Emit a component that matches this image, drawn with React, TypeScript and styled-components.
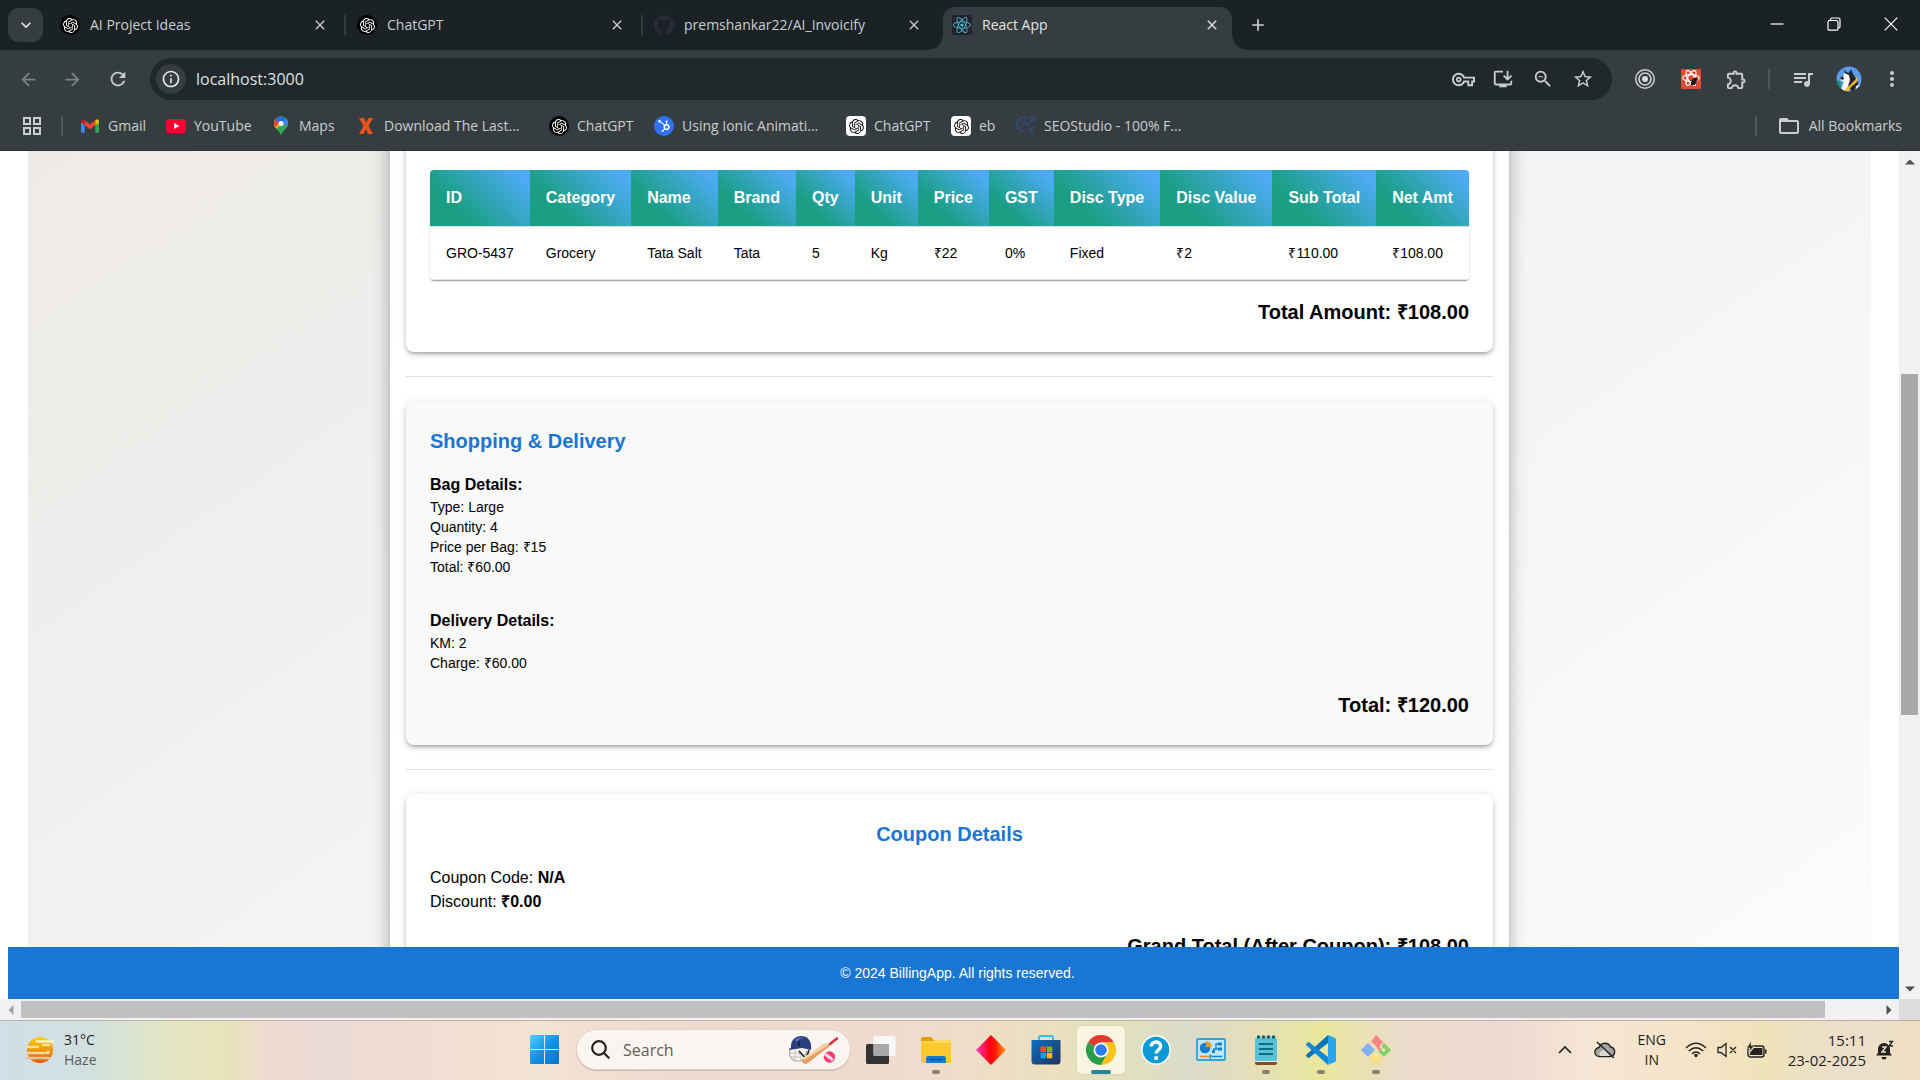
import React from "react";
import styled, { createGlobalStyle, css } from "styled-components";
import {
  MdArrowBack, MdArrowForward, MdRefresh, MdOutlineGridView, MdFolderOpen, MdMoreVert,
  MdQueueMusic, MdStarBorder, MdOutlineExtension, MdZoomOut, MdOutlineVpnKey,
  MdOutlineInstallDesktop, MdOutlineInfo, MdClose, MdAdd, MdExpandMore,
} from "react-icons/md";
import { SiOpenai, SiGithub, SiHubspot } from "react-icons/si";
import { FaReact } from "react-icons/fa";

const uiFont = `"Open Sans", "Noto Sans", sans-serif`;
const pageFont = `"Liberation Sans", Arial, sans-serif`;

const Global = createGlobalStyle`
  *, *::before, *::after { box-sizing: border-box; }
  html, body { margin: 0; }
  body { overflow: hidden; font-family: ${pageFont}; color: #000; background: #fff; }
  button, input { font: inherit; color: inherit; margin: 0; padding: 0; border: 0; background: none; outline: none; }
  a { color: inherit; text-decoration: none; }
  h2, h3, p { margin: 0; }
`;

const Screen = styled.div`
  display: flex;
  flex-direction: column;
  height: 100vh;
`;

/* ---------- browser frame ---------- */
const Center = css`
  display: flex;
  align-items: center;
  justify-content: center;
`;
const Browser = styled.header`
  font-family: ${uiFont};
  color: #c9cdcf;
  background: #363d40;
  font-size: 14px;
  line-height: 20px;
  border-bottom: 1px solid #2b3134;
`;
const TabStrip = styled.div`
  display: flex;
  height: 50px;
  background: #1b2225;
`;
const TabSearch = styled.button`
  ${Center}
  width: 35px;
  height: 34px;
  margin: 8px 4px 0 8px;
  border-radius: 11px;
  background: #363d40;
  color: #e3e5e6;
`;
const Tab = styled.div<{ $active?: boolean; $divider?: boolean }>`
  position: relative;
  display: flex;
  align-items: center;
  width: 297px;
  padding: 0 16px 0 13px;
  ${(p) => p.$divider && css`
    &::after {
      content: "";
      position: absolute;
      right: -2px;
      top: 15px;
      width: 2px;
      height: 20px;
      background: #363d40;
    }
  `}
  ${(p) => p.$active && css`
    width: 289px;
    margin: 7px 0 0 5px;
    padding: 0 12px 7px 9px;
    color: #e3e5e6;
    background: #363d40;
    border-radius: 12px 12px 0 0;
    &::before, &::after {
      content: "";
      position: absolute;
      bottom: 0;
      width: 14px;
      height: 14px;
    }
    &::before { left: -14px; background: radial-gradient(circle at 0 0, transparent 13px, #363d40 14px); }
    &::after { right: -14px; background: radial-gradient(circle at 100% 0, transparent 13px, #363d40 14px); }
  `}
`;
const TabTitle = styled.button`
  flex: 1;
  display: flex;
  align-items: center;
  gap: 10px;
  text-align: left;
  white-space: nowrap;
`;
const IconButton = styled.button<{ $w?: number }>`
  ${Center}
  flex: none;
  width: ${(p) => p.$w ?? 16}px;
`;
const WindowButtons = styled.div`
  display: flex;
  margin-left: auto;
  padding-bottom: 2px;
  color: #fff;
`;
const Toolbar = styled.div`
  display: flex;
  align-items: center;
  height: 50px;
  padding: 8px 7px 0 6px;
`;
const Omnibox = styled.div`
  flex: 1;
  display: flex;
  align-items: center;
  height: 42px;
  margin: 0 10px;
  padding: 0 9px 0 6px;
  border-radius: 21px;
  background: #20282b;
`;
const InfoButton = styled.button`
  ${Center}
  width: 30px;
  height: 30px;
  border-radius: 50%;
  background: #363d40;
  color: #e3e5e6;
`;
const Address = styled.input`
  flex: 1;
  min-width: 0;
  margin-left: 10px;
  font-size: 16px;
  color: #dfe2e3;
`;
const Rule = styled.span<{ $m?: string }>`
  width: 2px;
  height: 20px;
  margin: ${(p) => p.$m ?? "0"};
  background: #50585b;
`;
const BookmarkBar = styled.nav`
  display: flex;
  align-items: center;
  height: 50px;
  padding: 2px 18px 0 20px;
`;
const Bookmark = styled.a<{ $w?: number }>`
  display: flex;
  align-items: center;
  gap: 8px;
  width: ${(p) => (p.$w ? p.$w + "px" : "auto")};
  white-space: nowrap;
`;
const Badge = styled.span<{ $bg: string; $fg: string; $r: string }>`
  ${Center}
  flex: none;
  width: 20px;
  height: 20px;
  border-radius: ${(p) => p.$r};
  background: ${(p) => p.$bg};
  color: ${(p) => p.$fg};
`;
const Spacer = styled.span`flex: 1;`;

/* ---------- page view ---------- */
const PageArea = styled.div`
  flex: 1;
  min-height: 0;
  display: grid;
  grid-template: 1fr 21px / 1fr 21px;
`;
const View = styled.div`
  display: flex;
  flex-direction: column;
  min-height: 0;
  min-width: 0;
  background: #fff;
`;
const Backdrop = styled.main`
  flex: 1;
  min-height: 0;
  overflow: hidden;
  margin: 0 28px;
  background: linear-gradient(145deg, #edeae7 0%, #f0efed 25%, #f6f5f4 60%, #fbfbfa 100%);
`;
const Sheet = styled.article`
  max-width: 1119px;
  margin: -48px auto 0;
  padding: 0 16px 16px;
  background: #fff;
  box-shadow: 0 6px 6px -3px rgba(0,0,0,.2), 0 10px 14px 1px rgba(0,0,0,.14), 0 4px 18px 3px rgba(0,0,0,.12);
`;
const Card = styled.section<{ $tint?: boolean; $scrolled?: boolean }>`
  padding: ${(p) => (p.$scrolled ? "67px 24px 24px" : "24px")};
  border-radius: 8px;
  background: ${(p) => (p.$tint ? "#f9f9f9" : "#fff")};
  box-shadow: 0 3px 3px -2px rgba(0,0,0,.2), 0 3px 4px 0 rgba(0,0,0,.14), 0 1px 8px 0 rgba(0,0,0,.12);
`;
const Divider = styled.hr`
  height: 1px;
  margin: 24px 0;
  border: 0;
  background: #e0e0e0;
`;
const Heading = styled.h2<{ $center?: boolean }>`
  margin-bottom: 16px;
  font-size: 20px;
  line-height: 32px;
  color: #1976d2;
  text-align: ${(p) => (p.$center ? "center" : "left")};
`;
const SubHeading = styled.h3`
  font-size: 16px;
  line-height: 24px;
`;
const Block = styled.div`
  & + & { margin-top: 32px; }
`;
const Small = styled.p`
  font-size: 14px;
  line-height: 20px;
`;
const Body = styled.p`
  font-size: 16px;
  line-height: 24px;
`;
const Total = styled.p`
  margin-top: 16px;
  font-size: 20px;
  line-height: 32px;
  font-weight: 700;
  text-align: right;
`;
const TableBox = styled.div`
  overflow: hidden;
  border-radius: 4px;
  box-shadow: 0 2px 1px -1px rgba(0,0,0,.2), 0 1px 1px 0 rgba(0,0,0,.14), 0 1px 3px 0 rgba(0,0,0,.12);
`;
const Table = styled.table`
  width: 100%;
  border-collapse: collapse;
  text-align: left;
  white-space: nowrap;
  th, td { padding: 16px; border-bottom: 1px solid #e0e0e0; }
  th {
    font-size: 16px;
    line-height: 24px;
    color: #fff;
    background: linear-gradient(45deg, #1a9f85 30%, #4dabf5 90%) padding-box;
  }
  td { font-size: 14px; line-height: 20px; }
`;
const Footer = styled.footer`
  margin-left: 8px;
  padding: 16px 8px 16px 16px;
  background: #1976d2;
  color: #fff;
  font-size: 14px;
  line-height: 20px;
  text-align: center;
`;

const Track = styled.div<{ $row?: boolean }>`
  display: flex;
  flex-direction: ${(p) => (p.$row ? "row" : "column")};
  background: #f1f1f1;
  padding: ${(p) => (p.$row ? "2px 0" : "0 2px")};
`;
const ScrollButton = styled.button`
  ${Center}
  flex: none;
  width: 17px;
  height: 17px;
`;
const HButton = styled(ScrollButton)`width: 21px;`;
const VButton = styled(ScrollButton)`height: 21px;`;
const Rail = styled.div<{ $row?: boolean }>`
  flex: 1;
  display: flex;
  flex-direction: ${(p) => (p.$row ? "row" : "column")};
`;
const Gap = styled.span<{ $f: number }>`flex: ${(p) => p.$f};`;
const Thumb = styled.span<{ $f: number; $dark?: boolean }>`
  flex: ${(p) => p.$f};
  background: ${(p) => (p.$dark ? "#a8a8a8" : "#c1c1c1")};
`;
const Corner = styled.div`background: #dcdcdc;`;

/* ---------- taskbar ---------- */
const Taskbar = styled.footer`
  display: grid;
  grid-template-columns: 1fr auto 1fr;
  align-items: center;
  height: 60px;
  padding-bottom: 2px;
  border-top: 1px solid #bdb0a6;
  font-family: ${uiFont};
  font-size: 14px;
  line-height: 20px;
  color: #1d1d1d;
  background: linear-gradient(90deg, #d0dfe8 0%, #d2e1dd 5%, #e4e7c2 9%, #e9e2bb 12%, #eedcd0 13.5%, #ecdad6 17%,
    #efddd2 21%, #f3e3d3 28%, #eddad0 36%, #efdccd 48%, #ece0be 55%, #e0e0bf 59%, #dbdccb 62%, #e5deba 65%,
    #e8e79c 69%, #ecdcca 73%, #ecdad2 78%, #f6e6d4 83%, #f4e4c8 88%, #efe3ba 92%, #eddecb 96%, #eedfc4 100%);
`;
const Weather = styled.button`
  display: flex;
  align-items: center;
  gap: 9px;
  padding-left: 25px;
  text-align: left;
`;
const Line = styled.span<{ $soft?: boolean }>`
  display: block;
  color: ${(p) => (p.$soft ? "#585c5b" : "inherit")};
`;
const Apps = styled.div`
  display: flex;
  align-items: center;
  gap: 7px;
`;
const AppButton = styled.button<{ $mark?: "dot" | "bar" }>`
  ${Center}
  position: relative;
  width: 48px;
  height: 48px;
  border-radius: 5px;
  ${(p) => p.$mark === "bar" && css`background: rgba(255,252,236,.75); box-shadow: 0 0 1px 1px rgba(0,0,0,.05);`}
  ${(p) => p.$mark && css`
    &::after {
      content: "";
      position: absolute;
      bottom: 0;
      width: ${p.$mark === "bar" ? 20 : 8}px;
      height: 4px;
      border-radius: 2px;
      background: ${p.$mark === "bar" ? "#23859a" : "#89816f"};
    }
  `}
`;
const SearchBox = styled.label`
  display: flex;
  align-items: center;
  gap: 13px;
  width: 273px;
  height: 39px;
  margin-left: 2px;
  padding: 0 12px 0 14px;
  border-radius: 20px;
  background: #fbf5f1;
  box-shadow: 0 0 0 1px #e6d3c8, 0 1px 0 1px #cdbcb2;
`;
const SearchInput = styled.input`
  flex: 1;
  min-width: 0;
  font-size: 16px;
  &::placeholder { color: #5f5d5b; opacity: 1; }
`;
const Tray = styled.div`
  display: flex;
  align-items: center;
  justify-content: flex-end;
  padding-right: 25px;
`;
const TrayButton = styled.button<{ $w: number }>`
  ${Center}
  width: ${(p) => p.$w}px;
`;
const Clock = styled.button`
  margin: 0 9px 0 15px;
  font-size: 15px;
  text-align: right;
`;
const Lang = styled.button`
  width: 54px;
  text-align: center;
`;

/* ---------- drawings ---------- */
const Gmail = () => (
  <svg width="20" height="20" viewBox="0 0 20 20">
    <path d="M1 6v9.500a1.200 1.200 0 0 0 1.200 1.200h2.500V8.500z" fill="#4285f4" />
    <path d="M19 6v9.500a1.200 1.200 0 0 1-1.200 1.200h-2.500V8.500z" fill="#34a853" />
    <path d="M4.700 4.300 10 8.300l5.300-4v5L10 13.300l-5.300-4z" fill="#ea4335" />
    <path d="M1 5.300c0-2 2-2.500 3.200-1.500l.5.500v5L1 6.500z" fill="#c5221f" />
    <path d="M19 5.300c0-2-2-2.500-3.200-1.500l-.5.500v5L19 6.500z" fill="#fbbc04" />
  </svg>
);
const YouTube = () => (
  <svg width="20" height="20" viewBox="0 0 20 20">
    <rect y="3" width="20" height="14" rx="3.500" fill="#ff0033" />
    <path d="M8 7v6l5.300-3z" fill="#fff" />
  </svg>
);
const MapsPin = () => (
  <svg width="20" height="20" viewBox="0 0 20 20">
    <defs><clipPath id="pin"><path d="M10 .5a7 7 0 0 0-7 7c0 5 5.300 6.500 7 12 1.700-5.500 7-7 7-12a7 7 0 0 0-7-7z" /></clipPath></defs>
    <g clipPath="url(#pin)">
      <rect width="20" height="20" fill="#34a853" />
      <path d="M0 0h20L10 8 4 14 0 10z" fill="#fbbc04" />
      <path d="M0 0h10l-2 8-5 4-3-2z" fill="#ea4335" />
      <path d="M4 2 10 0h5l1 3-6 6-4-4z" fill="#1a73e8" />
      <path d="M12 0l6 4v5l-8 9 0-9 5-6z" fill="#34a853" />
      <path d="M15.500 2.500 10 9l3 1 5-3z" fill="#4285f4" />
    </g>
    <circle cx="10" cy="7.500" r="2.500" fill="#fff" />
  </svg>
);
const XMark = () => (
  <svg width="20" height="20" viewBox="0 0 20 20">
    <path d="M3 2h5l2.200 5L12.500 2H17l-4.500 8L17 18h-5l-2-5-2.500 5H3l4.500-8z" fill="#e8531c" />
  </svg>
);
const SeoMark = () => (
  <svg width="20" height="20" viewBox="0 0 20 20" fill="none" stroke="#2f4a80" strokeWidth="1.600">
    <path d="M11 1.500C5 0 1 4 1 8.500 1 13 5 16 9.500 15.500M14.500 14l3 5M13.500 15l4-4M5.500 11l4-5 2 3 7-8M14 1.500h4.500V6" />
  </svg>
);
const Target = () => (
  <svg width="22" height="22" viewBox="0 0 22 22" fill="none" stroke="#c9cdcf">
    <circle cx="11" cy="11" r="9.300" strokeWidth="1.500" /><circle cx="11" cy="11" r="6" strokeWidth="1.700" />
    <circle cx="11" cy="11" r="3" fill="#d8dbdc" stroke="none" />
  </svg>
);
const ReactBug = () => (
  <svg width="20" height="20" viewBox="0 0 20 20">
    <rect width="20" height="20" rx="1" fill="#e34a34" />
    <g fill="none" stroke="#fff" strokeWidth="1.200">
      <ellipse cx="10" cy="9" rx="8.300" ry="3.300" /><ellipse cx="10" cy="9" rx="8.300" ry="3.300" transform="rotate(60 10 9)" />
      <ellipse cx="10" cy="9" rx="8.300" ry="3.300" transform="rotate(120 10 9)" />
    </g>
    <ellipse cx="13" cy="12.500" rx="2.500" ry="4" fill="#241512" transform="rotate(25 13 12.500)" />
    <path d="M9 11l7 4M10 16l7-6" stroke="#241512" />
  </svg>
);
const Avatar = () => (
  <svg width="26" height="26" viewBox="0 0 26 26">
    <defs><clipPath id="av"><circle cx="13" cy="13" r="12.500" /></clipPath></defs>
    <g clipPath="url(#av)">
      <rect width="26" height="26" fill="#5b9bef" />
      <path d="M0 15q4-1 5 3v8H0z" fill="#13915f" />
      <path d="M8 3l2 3 3 1 2-4 2 5 5 8-1 8-5 2-5-9z" fill="#22252b" />
      <path d="M8 7l5 2 1 5-2 6-3 6-4-3 3-7-4-2 3-3z" fill="#f6f6f6" />
      <path d="M4 12l3-2 1 3-2 1z" fill="#22252b" />
      <path d="M8 25l5-5 6-6 2-3 1 1-1 4-6 5-3 5z" fill="#f6b722" />
      <path d="M20 20l5-2v8h-6z" fill="#dfe6ee" />
    </g>
  </svg>
);
const WinGlyph = ({ kind }: { kind: "min" | "max" | "close" }) => (
  <svg width="14" height="14" viewBox="0 0 14 14" fill="none" stroke="#fff" strokeWidth="1.200">
    {kind === "min" && <path d="M.5 7h13" />}
    {kind === "max" && <path d="M3.500 3V2.500a1.500 1.500 0 0 1 1.500-1.500h6.500A1.500 1.500 0 0 1 13 2.500v7a1.500 1.500 0 0 1-1.500 1.500M1 5a1.500 1.500 0 0 1 1.500-1.500h7A1.500 1.500 0 0 1 11 5v7a1.200 1.200 0 0 1-1.200 1.200H2.200A1.200 1.200 0 0 1 1 12z" />}
    {kind === "close" && <path d="M.700.700l12.600 12.600M13.300.700.700 13.300" />}
  </svg>
);
const Arrow = ({ d, fill = "#505050" }: { d: string; fill?: string }) => (
  <svg width="10" height="10" viewBox="0 0 10 10"><path d={d} fill={fill} /></svg>
);
const Haze = () => (
  <svg width="30" height="28" viewBox="0 0 30 28">
    <defs><linearGradient id="hz" x1="0" y1="0" x2="0" y2="1"><stop offset="0" stopColor="#ffd000" /><stop offset="1" stopColor="#e65a00" /></linearGradient></defs>
    <circle cx="15" cy="14" r="13" fill="url(#hz)" />
    <g strokeLinecap="round" strokeWidth="2.600">
      <path d="M12 5.500h16" stroke="#fff3cf" /><path d="M3 11h10M18 9h6" stroke="#f8e3a0" />
      <path d="M2 17h18" stroke="#ead9ac" /><path d="M2 22h22" stroke="#dfc69c" />
    </g>
    <circle cx="23" cy="16.500" r="2" fill="#f6dca0" />
  </svg>
);
const WinLogo = () => (
  <svg width="29" height="29" viewBox="0 0 29 29">
    <defs><linearGradient id="wl" x1="0" y1="0" x2="1" y2="1"><stop offset="0" stopColor="#50d0fb" /><stop offset=".5" stopColor="#1193e4" /><stop offset="1" stopColor="#0571d0" /></linearGradient></defs>
    <path d="M1 0h13v14H0V1a1 1 0 0 1 1-1zM15 0h13a1 1 0 0 1 1 1v13H15zM0 15h14v14H1a1 1 0 0 1-1-1zM15 15h14v13a1 1 0 0 1-1 1H15z" fill="url(#wl)" />
  </svg>
);
const Lens = () => (
  <svg width="19" height="19" viewBox="0 0 19 19" fill="none" stroke="#222" strokeWidth="2.200" strokeLinecap="round">
    <circle cx="8" cy="8" r="6.800" /><path d="M13 13l4.700 4.700" />
  </svg>
);
const Cricket = () => (
  <svg width="50" height="30" viewBox="0 0 50 30">
    <path d="M2 15q-2 8 5 11h7l5-10" fill="none" stroke="#a9aaa5" strokeWidth="1.200" />
    <path d="M1 18h13M2 22h11M7 15v11M11 15l2 11" fill="none" stroke="#c3c4bf" />
    <path d="M3 13C2 5 8 1 13 1c7 0 11 5 10 14l-9-2-13 2q0-2 2-2z" fill="#2b3f7f" />
    <path d="M7 5q4-4 9-2-5 0-7 4z" fill="#5c73b4" /><path d="M11 6v5" stroke="#141c3c" strokeWidth="1.500" />
    <path d="M21 15l-3 9-7-8" fill="none" stroke="#2a2c33" strokeWidth="1.800" />
    <path d="M42 9 49 3.500" stroke="#d83242" strokeWidth="2.600" strokeLinecap="round" />
    <path d="M13 25 36 9q4-1 6 2L20 28q-4 3-7-3z" fill="#e5a264" /><path d="M15 24 39 9.500" stroke="#f8d6ab" strokeWidth="2.500" />
    <circle cx="41.500" cy="22" r="5.700" fill="#f0406a" /><path d="M37 19l8 6" stroke="#f6d9f2" strokeWidth="3" />
  </svg>
);
const TaskView = () => (
  <svg width="30" height="30" viewBox="0 0 30 30">
    <rect x="0" y="9" width="23" height="20" rx="1.500" fill="#333" />
    <rect x="7.500" y="1" width="22" height="20" rx="1.500" fill="#f7f7f7" />
    <path d="M8 9h15v12H9a1 1 0 0 1-1-1z" fill="#aaa9a8" />
  </svg>
);
const Explorer = () => (
  <svg width="30" height="28" viewBox="0 0 30 28">
    <path d="M0 3a2 2 0 0 1 2-2h8l3 3h15a2 2 0 0 1 2 2v4H0z" fill="#dfa000" />
    <rect y="5" width="30" height="22" rx="1.500" fill="#fdc92f" /><path d="M0 5.500h12l2-1.500h16v3H0z" fill="#ffd95a" />
    <path d="M5 27v-5a2 2 0 0 1 2-2h16a2 2 0 0 1 2 2v5z" fill="#0f7bd4" /><path d="M9 23.500h12" stroke="#0a4f94" strokeWidth="1.300" />
  </svg>
);
const Diamond = () => (
  <svg width="30" height="30" viewBox="0 0 30 30">
    <defs><linearGradient id="dm"><stop offset="0" stopColor="#ff3fc0" /><stop offset=".45" stopColor="#ff0010" /><stop offset=".65" stopColor="#ff1c00" /><stop offset="1" stopColor="#ffa51e" /></linearGradient></defs>
    <path d="M15 0 30 15 15 30 0 15z" fill="url(#dm)" />
  </svg>
);
const Store = () => (
  <svg width="30" height="30" viewBox="0 0 30 30">
    <defs><linearGradient id="st" x1="0" y1="0" x2="1" y2="1"><stop offset="0" stopColor="#0c6fc0" /><stop offset="1" stopColor="#23335f" /></linearGradient></defs>
    <path d="M8 6V2.500A1.500 1.500 0 0 1 9.500 1h11A1.500 1.500 0 0 1 22 2.500V6" fill="none" stroke="#2fc0f5" strokeWidth="2" />
    <path d="M.5 5h29v21a3.500 3.500 0 0 1-3.500 3.500H4A3.500 3.500 0 0 1 .5 26z" fill="url(#st)" />
    <path d="M9.500 11.500H15V17H9.500z" fill="#f25022" /><path d="M15.800 11.500h5.500V17h-5.500z" fill="#7fba00" />
    <path d="M9.500 17.800H15v5.500H9.500z" fill="#00a4ef" /><path d="M15.800 17.800h5.500v5.500h-5.500z" fill="#ffb900" />
  </svg>
);
const Chrome = () => (
  <svg width="30" height="30" viewBox="0 0 30 30">
    <path d="M15 15 2 7.500A15 15 0 0 1 28 7.500H15z" fill="#e33b2e" />
    <path d="M15 15 21.500 18.700 15 30A15 15 0 0 1 2 7.500z" fill="#2a9d49" />
    <path d="M15 7.500h13A15 15 0 0 1 15 30l6.500-11.300z" fill="#fcc31e" />
    <circle cx="15" cy="15" r="7.500" fill="#fff" /><circle cx="15" cy="15" r="5.800" fill="#2f7bee" />
  </svg>
);
const Help = () => (
  <svg width="30" height="30" viewBox="0 0 30 30">
    <circle cx="15" cy="15" r="15" fill="#f4fafc" /><circle cx="15" cy="15" r="13.300" fill="#0b9ad8" />
    <path d="M10.300 11.500c0-6 9.400-5.800 9.400-.300 0 3.600-4.500 3.800-4.500 7.300" fill="none" stroke="#fff" strokeWidth="3.400" /><circle cx="15.200" cy="23" r="2.100" fill="#fff" />
  </svg>
);
const Panel = () => (
  <svg width="30" height="24" viewBox="0 0 30 24">
    <rect x="1" y="1" width="28" height="21" rx="1" fill="#bfe8fb" stroke="#2ea3dc" strokeWidth="1.800" />
    <circle cx="9" cy="10" r="5.300" fill="#1781c6" /><path d="M10 9V3a6 6 0 0 1 6 6z" fill="#f59a23" />
    <path d="M17 11h3V6h3M20 11h3" stroke="#1781c6" fill="none" strokeWidth="1.300" />
    <path d="M22 4.500h4v3h-4zM22 9.500h4v3h-4zM16 12h3v3h-3z" fill="#1781c6" />
    <path d="M4 18.500h10" stroke="#f08b1b" strokeWidth="1.600" /><path d="M16 18.500h10M14.500 16.500v4" stroke="#1781c6" strokeWidth="1.600" />
  </svg>
);
const Notepad = () => (
  <svg width="22" height="30" viewBox="0 0 22 30">
    <path d="M0 26h22v2a2 2 0 0 1-2 2H2a2 2 0 0 1-2-2z" fill="#8b4a1b" /><path d="M0 24h22v3H0z" fill="#e8f0f0" />
    <rect y="3" width="22" height="23" rx="1.500" fill="#58c1d8" />
    <path d="M4 9h14M4 14h14M4 19h14" stroke="#0d6c86" strokeWidth="2" />
    <g fill="#0e5f74"><circle cx="3.500" cy="2" r="1.800" /><circle cx="8.500" cy="2" r="1.800" /><circle cx="13.500" cy="2" r="1.800" /><circle cx="18.500" cy="2" r="1.800" /></g>
  </svg>
);
const VsCode = () => (
  <svg width="30" height="30" viewBox="0 0 30 30">
    <path d="M22 0v8L3.500 22.500a1.500 1.500 0 0 1-2 0L.5 21.300a1.300 1.300 0 0 1 0-1.900z" fill="#0b72b8" />
    <path d="M22 30v-8L3.500 7.500a1.500 1.500 0 0 0-2 0L.5 8.700a1.300 1.300 0 0 0 0 1.900z" fill="#1489d0" />
    <path d="M22 0l7 3a1.800 1.800 0 0 1 1 1.600v20.800a1.800 1.800 0 0 1-1 1.600l-7 3q1-1 0-2z" fill="#2ba4ee" />
  </svg>
);
const GitMark = () => (
  <svg width="30" height="30" viewBox="0 0 30 30">
    <path d="M15 0 22 7l-3 3.500q-1 2 1 3.500l-2 2-3-5-5-4.500z" fill="#fb8585" />
    <path d="M7 8 14 15 7 22 0 15z" fill="#80b0f8" />
    <path d="M23 8 30 15 23 22 17 16.500l3-2q2-1 1-4z" fill="#86cf63" />
    <circle cx="22.500" cy="15" r="1.700" fill="#ecead0" />
    <path d="M13.500 16h2.500l1 3 5 4.500L15 30l-7-7z" fill="#fbe07f" />
    <circle cx="15" cy="20" r="1.700" fill="#ecead0" />
  </svg>
);
const Chevron = () => (
  <svg width="14" height="9" viewBox="0 0 14 9" fill="none" stroke="#222" strokeWidth="1.600"><path d="M1 8l6-6 6 6" /></svg>
);
const CloudOff = () => (
  <svg width="22" height="18" viewBox="0 0 22 18">
    <path d="M5.500 15.500a4.500 4.500 0 0 1-.3-9A6 6 0 0 1 16.500 6a4.800 4.800 0 0 1 0 9.500z" fill="#a5a5a2" stroke="#222" strokeWidth="1.400" />
    <path d="M5 12l5-4 6 7H6z" fill="#d9d8d4" /><path d="M3 1l17 16" stroke="#222" strokeWidth="1.500" />
  </svg>
);
const Wifi = () => (
  <svg width="22" height="16" viewBox="0 0 22 16" fill="none" stroke="#222" strokeWidth="1.400">
    <path d="M1 6q10-9.500 20 0M4 9q7-6.500 14 0M7 12q4-4 8 0" /><circle cx="11" cy="13.500" r="1.700" fill="#222" stroke="none" />
  </svg>
);
const Mute = () => (
  <svg width="20" height="16" viewBox="0 0 20 16" fill="none" stroke="#222" strokeWidth="1.300">
    <path d="M1 5.500v5h3l5 4V1.500l-5 4zM13 5l6 6M19 5l-6 6" />
  </svg>
);
const Battery = () => (
  <svg width="20" height="18" viewBox="0 0 20 18">
    <rect x="1" y="5" width="16" height="11" rx="2.500" fill="none" stroke="#222" strokeWidth="1.400" />
    <path d="M7 7h8.500v7h-13l1-3z" fill="#222" /><path d="M18 8.500h1.500v4H18z" fill="#222" />
    <path d="M4 0 0 7h3l-1 4 5-6H4z" fill="#222" stroke="#f1e3bd" strokeWidth=".5" />
  </svg>
);
const Bell = () => (
  <svg width="18" height="20" viewBox="0 0 18 20">
    <path d="M2 9a6 6 0 0 1 12 0v4l2 2.500H0L2 13zM5.500 17h5a2.500 2.500 0 0 1-5 0z" fill="#222" />
    <path d="M6 7h4l-4 5h4" fill="none" stroke="#f0e2c4" strokeWidth="1.400" /><path d="M13 1.500h3.500L13 6h4" fill="none" stroke="#222" strokeWidth="1.300" />
  </svg>
);

const Gpt = ({ light }: { light?: boolean }) => (
  <Badge $bg={light ? "#fff" : "#000"} $fg={light ? "#111" : "#fff"} $r={light ? "4px" : "50%"}><SiOpenai size={15} /></Badge>
);

const tabs = [
  { title: "AI Project Ideas", icon: <Gpt />, divider: true },
  { title: "ChatGPT", icon: <Gpt />, divider: true },
  { title: "premshankar22/AI_Invoicify", icon: <Badge $bg="transparent" $fg="#282e33" $r="0"><SiGithub size={20} /></Badge> },
  { title: "React App", icon: <Badge $bg="#20232a" $fg="#53c1de" $r="2px"><FaReact size={18} /></Badge>, active: true },
];
const bookmarks = [
  { name: "Gmail", icon: <Gmail />, w: 86 },
  { name: "YouTube", icon: <YouTube />, w: 105 },
  { name: "Maps", icon: <MapsPin />, w: 85 },
  { name: "Download The Last...", icon: <XMark />, w: 193 },
  { name: "ChatGPT", icon: <Gpt />, w: 105 },
  { name: "Using Ionic Animati...", icon: <Badge $bg="#2f72f5" $fg="#fff" $r="50%"><SiHubspot size={12} /></Badge>, w: 192 },
  { name: "ChatGPT", icon: <Gpt light />, w: 105 },
  { name: "eb", icon: <Gpt light />, w: 65 },
  { name: "SEOStudio - 100% F...", icon: <SeoMark />, w: 192 },
];
const columns = ["ID", "Category", "Name", "Brand", "Qty", "Unit", "Price", "GST", "Disc Type", "Disc Value", "Sub Total", "Net Amt"];
const item = ["GRO-5437", "Grocery", "Tata Salt", "Tata", "5", "Kg", "₹22", "0%", "Fixed", "₹2", "₹110.00", "₹108.00"];
const apps: { name: string; icon: React.ReactNode; mark?: "dot" | "bar" }[] = [
  { name: "Task view", icon: <TaskView /> },
  { name: "File Explorer", icon: <Explorer />, mark: "dot" },
  { name: "Diamond", icon: <Diamond /> },
  { name: "Store", icon: <Store /> },
  { name: "Chrome", icon: <Chrome />, mark: "bar" },
  { name: "Help", icon: <Help /> },
  { name: "Control Panel", icon: <Panel /> },
  { name: "Notepad", icon: <Notepad />, mark: "dot" },
  { name: "VS Code", icon: <VsCode />, mark: "dot" },
  { name: "Git", icon: <GitMark />, mark: "dot" },
];

export default function App() {
  return (
    <Screen>
      <Global />
      <Browser>
        <TabStrip>
          <TabSearch aria-label="Search tabs"><MdExpandMore size={20} /></TabSearch>
          {tabs.map((t) => (
            <Tab key={t.title} $active={t.active} $divider={t.divider}>
              <TabTitle>{t.icon}{t.title}</TabTitle>
              <IconButton aria-label="Close tab"><MdClose size={16} /></IconButton>
            </Tab>
          ))}
          <IconButton $w={52} aria-label="New tab"><MdAdd size={20} /></IconButton>
          <WindowButtons>
            <IconButton $w={57} aria-label="Minimize"><WinGlyph kind="min" /></IconButton>
            <IconButton $w={57} aria-label="Restore"><WinGlyph kind="max" /></IconButton>
            <IconButton $w={58} aria-label="Close"><WinGlyph kind="close" /></IconButton>
          </WindowButtons>
        </TabStrip>
        <Toolbar>
          <IconButton $w={44} aria-label="Back"><MdArrowBack size={21} color="#7d8486" /></IconButton>
          <IconButton $w={45} aria-label="Forward"><MdArrowForward size={21} color="#7d8486" /></IconButton>
          <IconButton $w={45} aria-label="Reload"><MdRefresh size={22} /></IconButton>
          <Omnibox>
            <InfoButton aria-label="Site information"><MdOutlineInfo size={20} /></InfoButton>
            <Address aria-label="Address" defaultValue="localhost:3000" />
            <IconButton $w={40} aria-label="Passwords"><MdOutlineVpnKey size={23} /></IconButton>
            <IconButton $w={40} aria-label="Install"><MdOutlineInstallDesktop size={22} /></IconButton>
            <IconButton $w={40} aria-label="Zoom"><MdZoomOut size={22} /></IconButton>
            <IconButton $w={40} aria-label="Bookmark"><MdStarBorder size={22} /></IconButton>
          </Omnibox>
          <IconButton $w={46} aria-label="Recorder"><Target /></IconButton>
          <IconButton $w={45} aria-label="React tools"><ReactBug /></IconButton>
          <IconButton $w={46} aria-label="Extensions"><MdOutlineExtension size={23} /></IconButton>
          <Rule $m="0 10px 0 9px" />
          <IconButton $w={46} aria-label="Media"><MdQueueMusic size={24} /></IconButton>
          <IconButton $w={45} aria-label="Profile"><Avatar /></IconButton>
          <IconButton $w={42} aria-label="Menu"><MdMoreVert size={24} /></IconButton>
        </Toolbar>
        <BookmarkBar>
          <IconButton $w={24} aria-label="Apps"><MdOutlineGridView size={24} /></IconButton>
          <Rule $m="0 17px" />
          {bookmarks.map((b, i) => (
            <Bookmark key={i} href="#" $w={b.w}>{b.icon}{b.name}</Bookmark>
          ))}
          <Spacer />
          <Rule $m="0 20px 0 0" />
          <Bookmark href="#"><MdFolderOpen size={24} />All Bookmarks</Bookmark>
        </BookmarkBar>
      </Browser>

      <PageArea>
        <View>
          <Backdrop>
            <Sheet>
              <Card $scrolled>
                <TableBox>
                  <Table>
                    <thead><tr>{columns.map((c) => <th key={c} scope="col">{c}</th>)}</tr></thead>
                    <tbody><tr>{item.map((v, i) => <td key={columns[i]}>{v}</td>)}</tr></tbody>
                  </Table>
                </TableBox>
                <Total>Total Amount: ₹108.00</Total>
              </Card>
              <Divider />
              <Card $tint>
                <Heading>Shopping &amp; Delivery</Heading>
                <Block>
                  <SubHeading>Bag Details:</SubHeading>
                  <Small>Type: Large</Small>
                  <Small>Quantity: 4</Small>
                  <Small>Price per Bag: ₹15</Small>
                  <Small>Total: ₹60.00</Small>
                </Block>
                <Block>
                  <SubHeading>Delivery Details:</SubHeading>
                  <Small>KM: 2</Small>
                  <Small>Charge: ₹60.00</Small>
                </Block>
                <Total>Total: ₹120.00</Total>
              </Card>
              <Divider />
              <Card>
                <Heading $center>Coupon Details</Heading>
                <Body>Coupon Code: <strong>N/A</strong></Body>
                <Body>Discount: <strong>₹0.00</strong></Body>
                <Total>Grand Total (After Coupon): ₹108.00</Total>
              </Card>
            </Sheet>
          </Backdrop>
          <Footer>© 2024 BillingApp. All rights reserved.</Footer>
        </View>
        <Track>
          <VButton aria-label="Scroll up"><Arrow d="M0 7.500 5 2.500l5 5z" /></VButton>
          <Rail><Gap $f={202} /><Thumb $f={341} $dark /><Gap $f={263} /></Rail>
          <VButton aria-label="Scroll down"><Arrow d="M0 2.500h10l-5 5z" /></VButton>
        </Track>
        <Track $row>
          <HButton aria-label="Scroll left"><Arrow d="M7.500 0v10l-5-5z" fill="#a3a3a3" /></HButton>
          <Rail $row><Thumb $f={1804} /><Gap $f={53} /></Rail>
          <HButton aria-label="Scroll right"><Arrow d="M2.500 0v10l5-5z" /></HButton>
        </Track>
        <Corner />
      </PageArea>

      <Taskbar>
        <Weather>
          <Haze />
          <span><Line>31°C</Line><Line $soft>Haze</Line></span>
        </Weather>
        <Apps>
          <AppButton aria-label="Start"><WinLogo /></AppButton>
          <SearchBox>
            <Lens />
            <SearchInput placeholder="Search" aria-label="Search" />
            <Cricket />
          </SearchBox>
          {apps.map((a) => <AppButton key={a.name} aria-label={a.name} $mark={a.mark}>{a.icon}</AppButton>)}
        </Apps>
        <Tray>
          <TrayButton $w={40} aria-label="Hidden icons"><Chevron /></TrayButton>
          <TrayButton $w={40} aria-label="Cloud sync"><CloudOff /></TrayButton>
          <Lang><Line>ENG</Line><Line>IN</Line></Lang>
          <TrayButton $w={34} aria-label="Network"><Wifi /></TrayButton>
          <TrayButton $w={28} aria-label="Volume"><Mute /></TrayButton>
          <TrayButton $w={32} aria-label="Battery"><Battery /></TrayButton>
          <Clock><Line>15:11</Line><Line>23-02-2025</Line></Clock>
          <TrayButton $w={20} aria-label="Notifications"><Bell /></TrayButton>
        </Tray>
      </Taskbar>
    </Screen>
  );
}
